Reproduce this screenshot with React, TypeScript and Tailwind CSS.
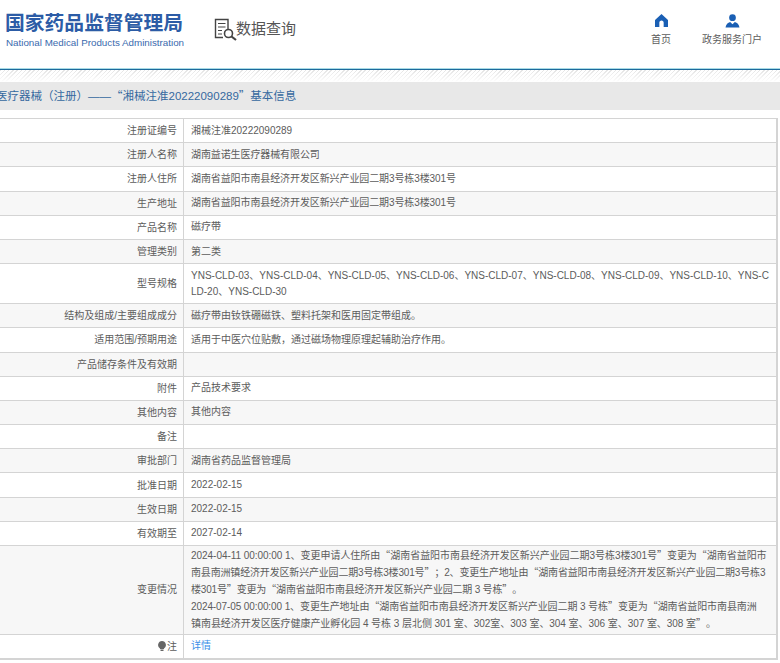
const rows: { label: string; value: string; tight?: boolean }[] = [
  { label: "注册证编号", value: "湘械注准20222090289" },
  { label: "注册人名称", value: "湖南益诺生医疗器械有限公司", tight: true },
  { label: "注册人住所", value: "湖南省益阳市南县经济开发区新兴产业园二期3号栋3楼301号", tight: true },
  { label: "生产地址", value: "湖南省益阳市南县经济开发区新兴产业园二期3号栋3楼301号", tight: true },
  { label: "产品名称", value: "磁疗带" },
  { label: "管理类别", value: "第二类" },
  { label: "型号规格", value: "YNS-CLD-03、YNS-CLD-04、YNS-CLD-05、YNS-CLD-06、YNS-CLD-07、YNS-CLD-08、YNS-CLD-09、YNS-CLD-10、YNS-CLD-20、YNS-CLD-30" },
  { label: "结构及组成/主要组成成分", value: "磁疗带由钕铁硼磁铁、塑料托架和医用固定带组成。" },
  { label: "适用范围/预期用途", value: "适用于中医穴位贴敷，通过磁场物理原理起辅助治疗作用。" },
  { label: "产品储存条件及有效期", value: "" },
  { label: "附件", value: "产品技术要求" },
  { label: "其他内容", value: "其他内容" },
  { label: "备注", value: "" },
  { label: "审批部门", value: "湖南省药品监督管理局" },
  { label: "批准日期", value: "2022-02-15" },
  { label: "生效日期", value: "2022-02-15" },
  { label: "有效期至", value: "2027-02-14" },
];

const changeLines = [
  { text: "2024-04-11 00:00:00 1、变更申请人住所由“湖南省益阳市南县经济开发区新兴产业园二期3号栋3楼301号”变更为“湖南省益阳市", cls: "tracking-[-0.04px]" },
  { text: "南县南洲镇经济开发区新兴产业园二期3号栋3楼301号”；2、变更生产地址由“湖南省益阳市南县经济开发区新兴产业园二期3号栋3", cls: "tracking-[-0.17px]" },
  { text: "楼301号”变更为“湖南省益阳市南县经济开发区新兴产业园二期 3 号栋”。", cls: "tracking-[-0.2px]" },
  { text: "2024-07-05 00:00:00 1、变更生产地址由“湖南省益阳市南县经济开发区新兴产业园二期 3 号栋”变更为“湖南省益阳市南县南洲", cls: "tracking-[-0.1px]" },
  { text: "镇南县经济开发区医疗健康产业孵化园 4 号栋 3 层北侧 301 室、302室、303 室、304 室、306 室、307 室、308 室”。", cls: "tracking-[-0.05px]" },
];

function Q({ text }: { text: string }) {
  return (
    <>
      {text.split(/([“”])/).map((part, i) =>
        part === "“" ? (
          <span key={i} className="inline-block w-[1em] text-right font-['Noto_Sans_CJK_SC',sans-serif]">{part}</span>
        ) : part === "”" ? (
          <span key={i} className="inline-block w-[1em] text-left font-['Noto_Sans_CJK_SC',sans-serif]">{part}</span>
        ) : (
          part
        ),
      )}
    </>
  );
}

function Row({ label, children, alt, minH }: { label: React.ReactNode; children: React.ReactNode; alt: boolean; minH: string }) {
  return (
    <div className={`flex border-b border-[#d4d4d4] ${alt ? "bg-[#f7f7f7]" : "bg-white"} ${minH}`}>
      <div className="w-[185px] shrink-0 border-r border-[#d4d4d4] flex items-center justify-end pr-[6px] text-[10px] text-[#5c5c5c]">
        {label}
      </div>
      <div className="flex-1 min-w-0 flex items-center pl-[7px] pr-[3px] text-[10px] leading-[16px] text-[#5c5c5c] break-all">
        <div>{children}</div>
      </div>
    </div>
  );
}

export default function App() {
  return (
    <div className="w-[780px] h-[663px] overflow-hidden bg-white font-['Liberation_Sans','Noto_Sans_CJK_SC',sans-serif]">
      <header className="h-[68px] flex items-start">
        <div className="ml-[5px] mt-[12px] w-[180px]">
          <div className="text-[19.8px] leading-[22px] font-bold text-[#2c5ca6] whitespace-nowrap">国家药品监督管理局</div>
          <div className="text-[9.8px] leading-[12px] ml-[1px] mt-[3px] text-[#3a6aae] whitespace-nowrap">National Medical Products Administration</div>
        </div>
        <div className="ml-[29px] mt-[19px] flex items-center">
          <svg width="23" height="23" viewBox="0 0 23 23" fill="none" stroke="#444" className="-mt-[1px]">
            <path d="M14 12V1.5H1.5V19.5H9" strokeWidth="1.4" />
            <path d="M4 5.5H11.5M4 9H11.5M4 12.5H8M4 16H8" strokeWidth="1.2" />
            <circle cx="14.5" cy="15.5" r="4" strokeWidth="1.6" />
            <path d="M17.5 18.5L22 22" strokeWidth="2.2" />
          </svg>
          <span className="text-[15px] leading-[20px] text-[#555] -ml-[1px] -mt-[2px]">数据查询</span>
        </div>
        <nav className="ml-auto flex mt-[14px] mr-[18px]">
          <div className="flex flex-col items-center mr-[31px]">
            <svg width="13" height="13" viewBox="0 0 15 14" fill="#1a5fb4" preserveAspectRatio="none">
              <path d="M7.5 0L15 6.5V14H10V9.5C10 8 9 7 7.5 7S5 8 5 9.5V14H0V6.5Z" />
            </svg>
            <span className="text-[10px] leading-[12px] text-[#5c5c5c] mt-[7px]">首页</span>
          </div>
          <div className="flex flex-col items-center">
            <svg width="15" height="14" viewBox="0 0 15 15" fill="#1a5fb4">
              <circle cx="7.5" cy="4" r="3.6" />
              <path d="M0 14.5C0.5 11 2.5 9.2 5 8.5L7.5 11L10 8.5C12.5 9.2 14.5 11 15 14.5Z" />
            </svg>
            <span className="text-[10px] leading-[12px] text-[#5c5c5c] mt-[6px]">政务服务门户</span>
          </div>
        </nav>
      </header>
      <div className="h-[1px] bg-[#a8dbe6]" />
      <div className="h-[1px] bg-[#1d6a9c]" />
      <div className="h-[12px] bg-[linear-gradient(to_bottom,transparent,white),repeating-linear-gradient(135deg,#e4e4e4_0,#e4e4e4_1px,#ffffff_1px,#ffffff_3px)]" />
      <div className="h-[28px] bg-[#e8e8e8] flex items-center text-[11.5px] text-[#35699f] whitespace-nowrap">
        <span className="-ml-[4px]"><Q text="医疗器械（注册）——“湘械注准20222090289”基本信息" /></span>
      </div>
      <div className="mt-[8px] mr-[2px] border-t border-r-2 border-b border-[#d4d4d4] -ml-[1px]">
        {rows.map((r, i) => (
          <Row key={r.label} label={r.label} alt={i % 2 === 1} minH={r.label === "型号规格" ? "h-[40px]" : "h-[24.2px]"}>
            <span className={r.tight ? "tracking-[-0.1px]" : ""}>{r.value}</span>
          </Row>
        ))}
        <Row label="变更情况" alt={true} minH="h-[88.6px]">
          {changeLines.map((line) => (
            <div key={line.text} className={`whitespace-nowrap ${line.cls}`}><Q text={line.text} /></div>
          ))}
        </Row>
        <Row
          label={
            <span className="flex items-center gap-[1px]">
              <svg width="8" height="10" viewBox="0 0 8 10" fill="#666">
                <path d="M4 0a4 4 0 0 1 2 7.4V8H2v-.6A4 4 0 0 1 4 0ZM2.5 8.6h3V10h-3Z" />
              </svg>
              注
            </span>
          }
          alt={false}
          minH="h-[24px]"
        >
          <span className="text-[#3b8fe8]">详情</span>
        </Row>
      </div>
    </div>
  );
}
